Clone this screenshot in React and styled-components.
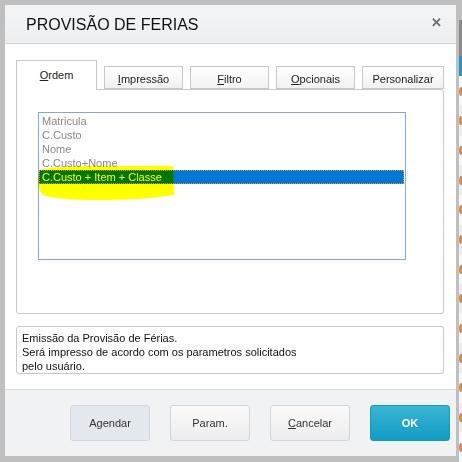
import styled, { createGlobalStyle } from "styled-components";

const GlobalStyle = createGlobalStyle`
  html, body {
    margin: 0;
    padding: 0;
    background: #bfbfbf;
    font-family: "Liberation Sans", Arial, sans-serif;
  }
`;

const Page = styled.div`
  display: flex;
  width: 462px;
  height: 462px;
  overflow: hidden;
`;

// dialog
const Dialog = styled.div`
  margin: 5px 0 0 5px;
  width: 451px;
  height: 451px;
  background: #fff;
  display: flex;
  flex-direction: column;
`;

const Header = styled.div`
  height: 38px;
  display: flex;
  align-items: center;
  justify-content: space-between;
  padding: 0 14px 0 21px;
  background: linear-gradient(#f4f5f6, #eceeef);
  border-bottom: 1px solid #d3d3d3;
`;

const Title = styled.div`
  font-size: 16px;
  color: #111;
  padding-top: 1px;
`;

const Close = styled.div`
  font-size: 13px;
  font-weight: bold;
  color: #6f6f6f;
  line-height: 1;
  margin-top: -3px;
`;

const Body = styled.div`
  flex: 1;
  padding: 16px 12px 0 11px;
  display: flex;
  flex-direction: column;
`;

// tabs
const TabRow = styled.div`
  display: flex;
  align-items: flex-end;
  gap: 7px;
`;

const Tab = styled.div`
  width: ${(p) => p.$w}px;
  height: ${(p) => (p.$active ? 30 : 23)}px;
  box-sizing: border-box;
  border: 1px solid #c8c8c8;
  border-bottom: ${(p) => (p.$active ? "none" : "1px solid #c8c8c8")};
  background: ${(p) => (p.$active ? "#fff" : "linear-gradient(#ffffff, #f1f1f1)")};
  display: flex;
  align-items: center;
  justify-content: center;
  font-size: 11px;
  color: #222;
  padding-bottom: ${(p) => (p.$active ? 2 : 0)}px;
  padding-top: ${(p) => (p.$active ? 0 : 2)}px;
  position: relative;
  z-index: 1;
  margin-bottom: ${(p) => (p.$active ? -1 : 0)}px;
`;

const Key = styled.span`
  text-decoration: underline;
`;

const Panel = styled.div`
  height: 225px;
  box-sizing: border-box;
  border: 1px solid #c8c8c8;
  border-radius: 0 3px 3px 3px;
  padding: 22px 0 0 21px;
`;

const ListBox = styled.div`
  position: relative;
  width: 368px;
  height: 148px;
  box-sizing: border-box;
  border: 1px solid #7ea6ee;
  padding: 1px 1px 0 0;
`;

const Item = styled.div`
  height: 14px;
  line-height: 14px;
  font-size: 11px;
  padding-left: 3px;
  color: ${(p) => (p.$sel ? "#fff" : "#8a8a8a")};
  background: ${(p) => (p.$sel ? "#0078d7" : "transparent")};
  outline: ${(p) => (p.$sel ? "1px dotted #f08a24" : "none")};
  outline-offset: -1px;
`;

const Marker = styled.svg`
  position: absolute;
  left: -2px;
  top: 52px;
  mix-blend-mode: multiply;
  pointer-events: none;
`;

const Description = styled.div`
  margin-top: 12px;
  height: 48px;
  box-sizing: border-box;
  border: 1px solid #c8c8c8;
  border-radius: 3px;
  padding: 4px 6px 0 5px;
  font-size: 11px;
  line-height: 14px;
  color: #111;
`;

// footer
const Footer = styled.div`
  margin-top: 14px;
  height: 67px;
  box-sizing: border-box;
  border-top: 1px solid #d8d8d8;
  background: #f1f2f3;
  display: flex;
  justify-content: flex-end;
  align-items: flex-start;
  gap: 20px;
  padding: 15px 6px 0 0;
`;

const Button = styled.div`
  width: 80px;
  height: 36px;
  box-sizing: border-box;
  border-radius: 3px;
  display: flex;
  align-items: center;
  justify-content: center;
  font-size: 11px;
  color: ${(p) => (p.$primary ? "#fff" : "#333")};
  font-weight: ${(p) => (p.$primary ? "bold" : "normal")};
  border: 1px solid ${(p) => (p.$primary ? "#1698bf" : "#d3d6d9")};
  background: ${(p) =>
    p.$primary
      ? "linear-gradient(#3cb4d4, #0f9dc4)"
      : p.$soft
      ? "#e3e7ee"
      : "linear-gradient(#fbfbfb, #ececec)"};
`;

// right side strip of the app behind
const Strip = styled.div`
  margin-left: 3px;
  width: 4px;
  display: flex;
  flex-direction: column;
`;

const StripTop = styled.div`
  height: 20px;
  background: #bfbfbf;
`;

const StripDark = styled.div`
  height: 37px;
  background: #8a8a8a;
`;

const StripBlue = styled.div`
  height: 20px;
  background: #1a9ad0;
`;

const StripRow = styled.div`
  height: 30px;
  background: ${(p) => (p.$alt ? "#eeeeee" : "#f8f8f8")};
  display: flex;
  align-items: center;
`;

const Dot = styled.div`
  width: 5px;
  height: 9px;
  border-radius: 50%;
  background: #d98c45;
`;

const tabs = [
  { w: 81, key: "O", rest: "rdem", active: true },
  { w: 79, key: "I", rest: "mpressão" },
  { w: 79, key: "F", rest: "iltro" },
  { w: 79, key: "O", rest: "pcionais" },
  { w: 82, key: "", rest: "Personalizar" },
];

const items = ["Matricula", "C.Custo", "Nome", "C.Custo+Nome", "C.Custo + Item + Classe"];

export default function App() {
  return (
    <>
      <GlobalStyle />
      <Page>
        <Dialog>
          <Header>
            <Title>PROVISÃO DE FERIAS</Title>
            <Close>✕</Close>
          </Header>
          <Body>
            <TabRow>
              {tabs.map((t) => (
                <Tab key={t.rest} $w={t.w} $active={t.active}>
                  {t.key && <Key>{t.key}</Key>}
                  {t.rest}
                </Tab>
              ))}
            </TabRow>
            <Panel>
              <ListBox>
                {items.map((it, i) => (
                  <Item key={it} $sel={i === 4}>
                    {it}
                  </Item>
                ))}
                <Marker width="140" height="40" viewBox="0 0 140 40">
                  <path
                    d="M3 5 C20 0, 60 1, 100 1 C120 1, 134 0, 136 2 L137 30 C120 33, 90 35, 60 35 C35 35, 18 33, 8 31 C3 29, 1 22, 1 14 Z"
                    fill="#ffff00"
                  />
                </Marker>
              </ListBox>
            </Panel>
            <Description>
              Emissão da Provisão de Férias.
              <br />
              Será impresso de acordo com os parametros solicitados
              <br />
              pelo usuário.
            </Description>
          </Body>
          <Footer>
            <Button $soft>Agendar</Button>
            <Button>Param.</Button>
            <Button>
              <Key>C</Key>ancelar
            </Button>
            <Button $primary>OK</Button>
          </Footer>
        </Dialog>
        <Strip>
          <StripTop />
          <StripDark />
          <StripBlue />
          {Array.from({ length: 13 }).map((_, i) => (
            <StripRow key={i} $alt={i % 2 === 1}>
              <Dot />
            </StripRow>
          ))}
        </Strip>
      </Page>
    </>
  );
}
